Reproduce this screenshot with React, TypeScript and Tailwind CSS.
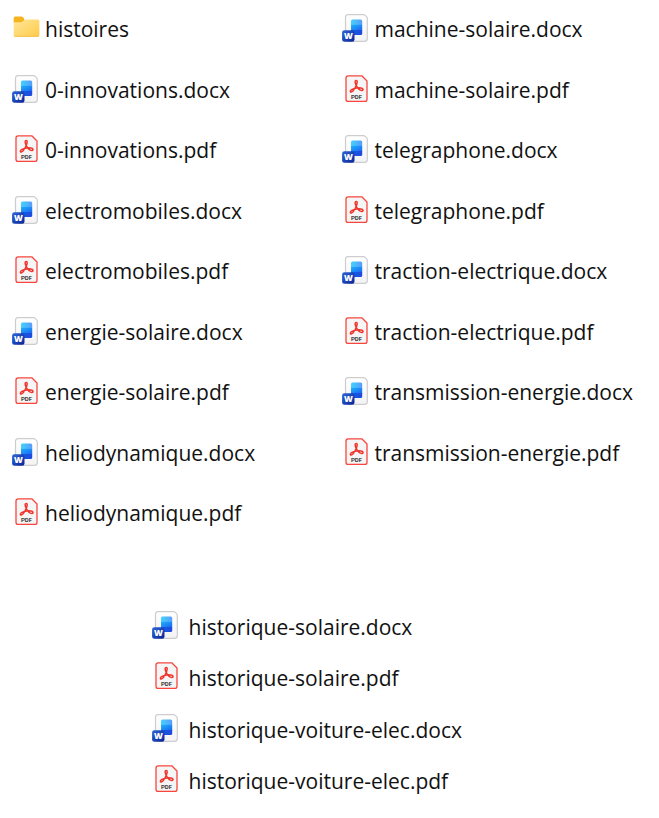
type FileKind = 'folder' | 'docx' | 'pdf';

const leftFiles = [
  'histoires',
  '0-innovations.docx',
  '0-innovations.pdf',
  'electromobiles.docx',
  'electromobiles.pdf',
  'energie-solaire.docx',
  'energie-solaire.pdf',
  'heliodynamique.docx',
  'heliodynamique.pdf',
];

const rightFiles = [
  'machine-solaire.docx',
  'machine-solaire.pdf',
  'telegraphone.docx',
  'telegraphone.pdf',
  'traction-electrique.docx',
  'traction-electrique.pdf',
  'transmission-energie.docx',
  'transmission-energie.pdf',
];

const historyFiles = [
  'historique-solaire.docx',
  'historique-solaire.pdf',
  'historique-voiture-elec.docx',
  'historique-voiture-elec.pdf',
];

function kindOf(name: string): FileKind {
  if (name.endsWith('.docx')) return 'docx';
  if (name.endsWith('.pdf')) return 'pdf';
  return 'folder';
}

// Gradients shared by every icon
function IconDefs() {
  return (
    <svg className="absolute w-0 h-0" aria-hidden="true">
      <defs>
        <linearGradient id="folder" x1="0" y1="0" x2="1" y2="1">
          <stop offset="0" stopColor="#ffe69a" />
          <stop offset="1" stopColor="#fdcb4a" />
        </linearGradient>
        <linearGradient id="badge" x1="0" y1="0" x2="1" y2="1">
          <stop offset="0" stopColor="#2f66d8" />
          <stop offset="1" stopColor="#0a2596" />
        </linearGradient>
        <linearGradient id="paper" x1="0" y1="0" x2="0" y2="1">
          <stop offset="0" stopColor="#ffffff" />
          <stop offset="1" stopColor="#f3f3f4" />
        </linearGradient>
        <linearGradient id="docTop" x1="0" y1="0" x2="1" y2="0">
          <stop offset="0" stopColor="#41d2fc" />
          <stop offset="1" stopColor="#5a9cfd" />
        </linearGradient>
        <linearGradient id="docMid" x1="0" y1="0" x2="1" y2="1">
          <stop offset="0" stopColor="#1fb0fa" />
          <stop offset="1" stopColor="#1a66f2" />
        </linearGradient>
        <linearGradient id="docLow" x1="0" y1="0" x2="1" y2="0">
          <stop offset="0" stopColor="#0a62e6" />
          <stop offset="1" stopColor="#2347dd" />
        </linearGradient>
      </defs>
    </svg>
  );
}

function FileIcon({ kind }: { kind: FileKind }) {
  if (kind === 'folder') {
    return (
      <svg viewBox="0 0 28 28" className="w-7 h-7 -mr-0.5 shrink-0" aria-hidden="true">
        <path d="M1.7 4q0-1.6 1.6-1.6h6q.8 0 1.4.6l1.5 1.5v5H1.7z" fill="#f5b31c" />
        <path d="M1.7 8.2h7.1q.8 0 1.4-.5l2.2-1.8q.6-.5 1.4-.5h12q1.6 0 1.6 1.5v14.4q0 1.500-1.600 1.500H3.300q-1.600 0-1.600-1.500z" fill="url(#folder)" />
        <path d="M2.3 22.3h24.4" stroke="#edb83a" strokeWidth=".7" />
      </svg>
    );
  }

  if (kind === 'docx') {
    return (
      <svg viewBox="0 0 26 28" className="w-[26px] h-7 shrink-0" aria-hidden="true">
        <path d="M6 .7h15.5q1 0 1.7.7l1.3 1.3q.8.8.8 1.8v19.9q0 2.9-2.9 2.9H6.4q-2.9 0-2.9-2.9V3.2Q3.5.7 6 .7z" fill="url(#paper)" stroke="#cdcdd0" strokeWidth="1.2" strokeLinejoin="round" />
        <path d="M10.5 5.6h8.2q1.500 0 1.500 1.500V11H9V7.100q0-1.500 1.500-1.500z" fill="url(#docTop)" />
        <path d="M9 10.8h11.2v5.4H9z" fill="url(#docMid)" />
        <path d="M9 16h11.2v3.5q0 1.5-1.5 1.5H9z" fill="url(#docLow)" />
        <rect x=".1" y="16.2" width="12.4" height="11.6" rx="2.2" fill="url(#badge)" />
        <text x="6.3" y="25" textAnchor="middle" fontSize="8.5" fontWeight="800" fill="#fff" className="font-['Open_Sans',sans-serif]">W</text>
      </svg>
    );
  }

  return (
    <svg viewBox="0 0 26 28" className="w-[26px] h-7 shrink-0" aria-hidden="true">
      <path d="M6.2.8h13.6l5.2 5.2v18.2q0 2.2-2.2 2.2H6.2Q4 26.4 4 24.2V3Q4 .8 6.2.8z" fill="#f5f5f5" stroke="#f8463e" strokeWidth="1.3" strokeLinejoin="round" />
      {/* three lobed ribbon */}
      <path
        d="M14.3 5.4C12.6 5.4 12.9 8 14.3 10.6C15.9 13.5 18.300 15.500 20 15.400C21.600 15.200 21.400 13.200 18.900 12.900C15.900 12.500 12.300 13.200 10 14.400C7.900 15.500 8 17.200 9.300 17C10.900 16.700 13 13.200 14.300 10.200C15.300 7.700 15.600 5.400 14.300 5.400z"
        fill="none"
        stroke="#f0352d"
        strokeWidth="1.5"
        strokeLinejoin="round"
      />
      <text x="14.5" y="23.8" textAnchor="middle" fontSize="6" fontWeight="500" fill="#111" className="font-['Roboto',sans-serif]">PDF</text>
    </svg>
  );
}

function FileRow({ name, wide = false }: { name: string; wide?: boolean }) {
  return (
    <li className={`flex items-start ${wide ? 'gap-[11px] leading-8' : 'gap-[7px] leading-[30px]'}`}>
      <FileIcon kind={kindOf(name)} />
      <span className="whitespace-nowrap">{name}</span>
    </li>
  );
}

export default function App() {
  return (
    <main className="min-h-screen bg-white text-[#111111] text-[21px] font-['Open_Sans','Noto_Sans',sans-serif]">
      <IconDefs />
      <div className="grid grid-cols-2 pt-3.5">
        <ul className="grid auto-rows-[61px_60px] content-start pl-3">
          {leftFiles.map((name) => (
            <FileRow key={name} name={name} />
          ))}
        </ul>
        <ul className="grid auto-rows-[61px_60px] content-start pl-3">
          {rightFiles.map((name) => (
            <FileRow key={name} name={name} />
          ))}
        </ul>
      </div>
      <ul className="grid auto-rows-[51px_52px] pt-[52px] pl-[23%]">
        {historyFiles.map((name) => (
          <FileRow key={name} name={name} wide />
        ))}
      </ul>
    </main>
  );
}
